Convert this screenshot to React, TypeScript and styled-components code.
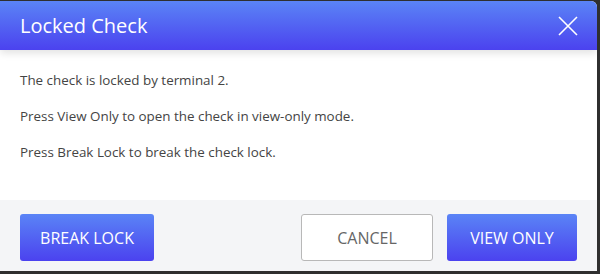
import React from "react";
import styled, { createGlobalStyle } from "styled-components";

const Global = createGlobalStyle`
  html, body { margin: 0; padding: 0; background: #2f2f2f; }
  body { width: 600px; height: 274px; overflow: hidden; }
`;

const Dialog = styled.div`
  margin-top: 1px;
  width: 597px;
  height: 270px;
  background: #ffffff;
  border-radius: 0 6px 0 0;
  overflow: hidden;
  display: flex;
  flex-direction: column;
  font-family: "Open Sans", "Noto Sans", sans-serif;
`;

const Header = styled.div`
  height: 49px;
  flex: none;
  display: flex;
  align-items: center;
  justify-content: space-between;
  padding: 0 18px 0 20px;
  background: linear-gradient(180deg, #5a84f6 0%, #4b42ef 100%);
  box-shadow: 0 3px 8px rgba(0, 0, 0, 0.12);
  position: relative;
  z-index: 1;
`;

const Title = styled.h1`
  margin: 0 0 1px 0;
  font-size: 20px;
  font-weight: 400;
  color: #ffffff;
`;

const Close = styled.button`
  border: 0;
  background: none;
  padding: 0;
  width: 22px;
  height: 22px;
  display: flex;
  cursor: pointer;
`;

const Body = styled.div`
  flex: 1;
  padding: 21px 20px 0 20px;
  display: flex;
  flex-direction: column;
  gap: 18px;
`;

const Line = styled.p`
  margin: 0;
  font-size: 13.4px;
  line-height: 18px;
  color: #444444;
`;

const Footer = styled.div`
  height: 71px;
  flex: none;
  box-sizing: border-box;
  background: #f4f5f7;
  display: flex;
  align-items: flex-start;
  padding: 14px 20px 0 20px;
  gap: 14px;
`;

const Spacer = styled.div`
  flex: 1;
`;

const Button = styled.button<{ $variant: "primary" | "secondary"; $width: number }>`
  width: ${(p) => p.$width}px;
  height: 47px;
  box-sizing: border-box;
  border-radius: 3px;
  font-family: "Open Sans", "Noto Sans", sans-serif;
  font-size: 16px;
  font-weight: 400;
  text-transform: uppercase;
  cursor: pointer;
  ${(p) =>
    p.$variant === "primary"
      ? `
    border: 0;
    color: #ffffff;
    background: linear-gradient(180deg, #5a84f6 0%, #4b42ef 100%);
  `
      : `
    border: 1px solid #b8b8b8;
    color: #666666;
    background: #ffffff;
  `}
`;

export default function App() {
  return (
    <>
      <Global />
      <Dialog>
        <Header>
          <Title>Locked Check</Title>
          <Close aria-label="Close">
            <svg width="22" height="22" viewBox="0 0 22 22">
              <path d="M2 2 L20 20 M20 2 L2 20" stroke="#ffffff" strokeWidth="1.6" fill="none" />
            </svg>
          </Close>
        </Header>
        <Body>
          <Line>The check is locked by terminal 2.</Line>
          <Line>Press View Only to open the check in view-only mode.</Line>
          <Line>Press Break Lock to break the check lock.</Line>
        </Body>
        <Footer>
          <Button $variant="primary" $width={134}>Break Lock</Button>
          <Spacer />
          <Button $variant="secondary" $width={132}>Cancel</Button>
          <Button $variant="primary" $width={130}>View Only</Button>
        </Footer>
      </Dialog>
    </>
  );
}
